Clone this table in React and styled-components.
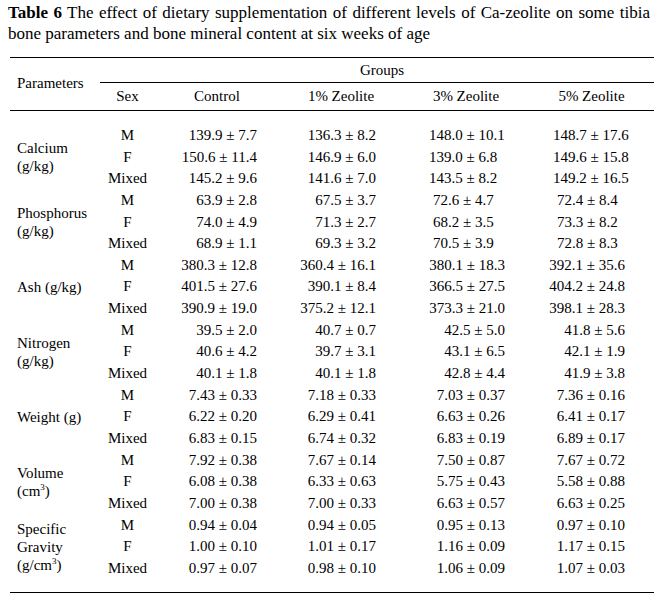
import React from 'react'
import styled, { createGlobalStyle } from 'styled-components'

const GlobalStyle = createGlobalStyle`
  html, body {
    margin: 0;
    padding: 0;
    background: #ffffff;
  }
  body {
    font-family: 'Liberation Serif', 'Times New Roman', serif;
    color: #000000;
  }
`

// right padding of each value column, so the numbers line up like the scan
const COL_PAD = [22, 27, 24, 29]

const GROUPS = [
  {
    label: ['Calcium', '(g/kg)'],
    // these two columns are set flush left in the original
    left: [null, null, 26, 24],
    rows: [
      ['M', '139.9 ± 7.7', '136.3 ± 8.2', '148.0 ± 10.1', '148.7 ± 17.6'],
      ['F', '150.6 ± 11.4', '146.9 ± 6.0', '139.0 ± 6.8', '149.6 ± 15.8'],
      ['Mixed', '145.2 ± 9.6', '141.6 ± 7.0', '143.5 ± 8.2', '149.2 ± 16.5'],
    ],
  },
  {
    label: ['Phosphorus', '(g/kg)'],
    left: [null, null, 30, 28],
    rows: [
      ['M', '63.9 ± 2.8', '67.5 ± 3.7', '72.6 ± 4.7', '72.4 ± 8.4'],
      ['F', '74.0 ± 4.9', '71.3 ± 2.7', '68.2 ± 3.5', '73.3 ± 8.2'],
      ['Mixed', '68.9 ± 1.1', '69.3 ± 3.2', '70.5 ± 3.9', '72.8 ± 8.3'],
    ],
  },
  {
    label: ['Ash (g/kg)'],
    rows: [
      ['M', '380.3 ± 12.8', '360.4 ± 16.1', '380.1 ± 18.3', '392.1 ± 35.6'],
      ['F', '401.5 ± 27.6', '390.1 ± 8.4', '366.5 ± 27.5', '404.2 ± 24.8'],
      ['Mixed', '390.9 ± 19.0', '375.2 ± 12.1', '373.3 ± 21.0', '398.1 ± 28.3'],
    ],
  },
  {
    label: ['Nitrogen', '(g/kg)'],
    rows: [
      ['M', '39.5 ± 2.0', '40.7 ± 0.7', '42.5 ± 5.0', '41.8 ± 5.6'],
      ['F', '40.6 ± 4.2', '39.7 ± 3.1', '43.1 ± 6.5', '42.1 ± 1.9'],
      ['Mixed', '40.1 ± 1.8', '40.1 ± 1.8', '42.8 ± 4.4', '41.9 ± 3.8'],
    ],
  },
  {
    label: ['Weight (g)'],
    rows: [
      ['M', '7.43 ± 0.33', '7.18 ± 0.33', '7.03 ± 0.37', '7.36 ± 0.16'],
      ['F', '6.22 ± 0.20', '6.29 ± 0.41', '6.63 ± 0.26', '6.41 ± 0.17'],
      ['Mixed', '6.83 ± 0.15', '6.74 ± 0.32', '6.83 ± 0.19', '6.89 ± 0.17'],
    ],
  },
  {
    label: ['Volume', <>(cm<sup>3</sup>)</>],
    rows: [
      ['M', '7.92 ± 0.38', '7.67 ± 0.14', '7.50 ± 0.87', '7.67 ± 0.72'],
      ['F', '6.08 ± 0.38', '6.33 ± 0.63', '5.75 ± 0.43', '5.58 ± 0.88'],
      ['Mixed', '7.00 ± 0.38', '7.00 ± 0.33', '6.63 ± 0.57', '6.63 ± 0.25'],
    ],
  },
  {
    label: ['Specific', 'Gravity', <>(g/cm<sup>3</sup>)</>],
    rows: [
      ['M', '0.94 ± 0.04', '0.94 ± 0.05', '0.95 ± 0.13', '0.97 ± 0.10'],
      ['F', '1.00 ± 0.10', '1.01 ± 0.17', '1.16 ± 0.09', '1.17 ± 0.15'],
      ['Mixed', '0.97 ± 0.07', '0.98 ± 0.10', '1.06 ± 0.09', '1.07 ± 0.03'],
    ],
  },
]

const HEADINGS = ['Control', '1% Zeolite', '3% Zeolite', '5% Zeolite']

const App = () => {
  return (
    <Page>
      <GlobalStyle />
      <Caption>
        <b>Table 6</b> The effect of dietary supplementation of different levels of Ca-zeolite on some tibia bone
        parameters and bone mineral content at six weeks of age
      </Caption>
      <Table>
        <Head>
          <ParamHead>Parameters</ParamHead>
          <GroupsHead>Groups</GroupsHead>
          <ColHead>Sex</ColHead>
          {HEADINGS.map((h) => (
            <ColHead key={h}>{h}</ColHead>
          ))}
        </Head>
        <Body>
          {GROUPS.map((g) => (
            <React.Fragment key={g.rows[0][1]}>
              <ParamLabel>
                {g.label.map((line, i) => (
                  <div key={i}>{line}</div>
                ))}
              </ParamLabel>
              {g.rows.map((row) => (
                <React.Fragment key={row[0]}>
                  <SexCell>{row[0]}</SexCell>
                  {row.slice(1).map((v, i) => {
                    const left = g.left && g.left[i]
                    return left ? (
                      <ValueCell key={i} $align="left" $pad={left}>
                        {v}
                      </ValueCell>
                    ) : (
                      <ValueCell key={i} $align="right" $pad={COL_PAD[i]}>
                        {v}
                      </ValueCell>
                    )
                  })}
                </React.Fragment>
              ))}
            </React.Fragment>
          ))}
        </Body>
      </Table>
    </Page>
  )
}

const Page = styled.div`
  width: 660px;
  height: 604px;
  overflow: hidden;
  background: #ffffff;
`
const Caption = styled.div`
  padding: 2px 10px 0 8px;
  font-size: 17px;
  line-height: 21px;
  text-align: justify;
  color: #000;
`
const Table = styled.div`
  width: 644px;
  margin: 13px 0 0 10px;
  font-size: 15px;
  color: #000;
`
const Head = styled.div`
  display: grid;
  grid-template-columns: 90px 55px 124px 124px 126px 125px;
  grid-template-rows: 25px 27px;
  border-top: 1.5px solid #000;
  border-bottom: 1.5px solid #000;
`
const ParamHead = styled.div`
  grid-row: 1 / 3;
  align-self: center;
  padding-left: 7px;
  padding-bottom: 2px;
`
const GroupsHead = styled.div`
  grid-column: 2 / 7;
  display: flex;
  align-items: center;
  justify-content: center;
  padding-left: 10px;
  border-bottom: 1.5px solid #000;
`
const ColHead = styled.div`
  display: flex;
  align-items: center;
  justify-content: center;
`
const Body = styled.div`
  display: grid;
  grid-template-columns: 90px 55px 124px 124px 126px 125px;
  grid-auto-rows: 21.65px;
  padding: 14px 0 13px;
  border-bottom: 1.5px solid #000;
  line-height: 21.65px;
`
const ParamLabel = styled.div`
  grid-row: span 3;
  align-self: center;
  padding-left: 7px;
  line-height: 18px;

  sup {
    font-size: 9px;
    line-height: 0;
  }
`
const SexCell = styled.div`
  text-align: center;
`
const ValueCell = styled.div`
  text-align: ${(p) => p.$align};
  padding-${(p) => p.$align}: ${(p) => p.$pad}px;
  white-space: nowrap;
`

export default App
